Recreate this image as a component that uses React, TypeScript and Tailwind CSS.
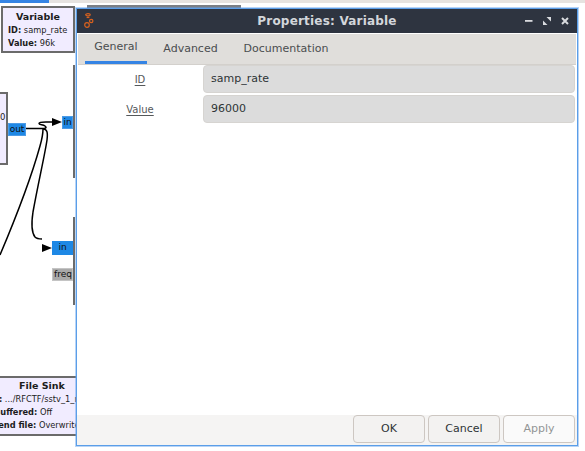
const FONT = "font-['DejaVu_Sans',sans-serif]"

function Logo() {
  return (
    <svg width="10" height="16" viewBox="0 0 10 16" fill="none" stroke="#d9621e" strokeWidth="1.2">
      <ellipse cx="4" cy="1.8" rx="2.3" ry="1.1" />
      <path d="M2.6 4.4h2.8" strokeWidth="1.4" />
      <circle cx="7.2" cy="8" r="1.7" />
      <circle cx="3" cy="12" r="2.3" />
    </svg>
  )
}

function Canvas() {
  return (
    <>
      {/* top strip */}
      <div className="absolute left-0 top-0 h-[3px] w-[585px] bg-[#e6e3e0]" />
      <div className="absolute left-0 top-0 h-[3px] w-[49px] bg-[#3584e4]" />
      <div className="absolute left-[87px] top-[5px] h-[3px] w-[154px] bg-[#7b7f85]" />

      {/* Variable block */}
      <div className="absolute left-[1px] top-[6px] flex h-[47px] w-[74px] flex-col items-center border-2 border-[#6b6b6b] bg-[#f1ecff] pt-[2px] text-[#1c1c1c]">
        <div className="text-[9.5px] leading-[14px] font-bold">Variable</div>
        <div className="w-full pl-[5px] text-[8.25px] leading-[13px] whitespace-nowrap"><b>ID:</b> samp_rate</div>
        <div className="w-full pl-[5px] text-[8.25px] leading-[13px] whitespace-nowrap"><b>Value:</b> 96k</div>
      </div>

      {/* source block edge */}
      <div className="absolute left-0 top-[92px] h-[73px] w-[8px] border-y-2 border-r-2 border-[#6b6b6b] bg-[#f1ecff]">
        <span className="absolute left-0 top-[19px] text-[8.5px] leading-[9px] text-[#222]">0</span>
      </div>

      {/* right blocks behind the dialog */}
      <div className="absolute left-[73px] top-[65px] h-[113px] w-[2px] bg-[#6b6b6b]" />
      <div className="absolute left-[73px] top-[217px] h-[88px] w-[2px] bg-[#6b6b6b]" />

      {/* ports */}
      <div className="absolute left-[8px] top-[123px] flex h-[13px] w-[18px] items-center justify-center border border-[#4d9be6] bg-[#1e88e5] text-[9px] text-[#111]">out</div>
      <div className="absolute left-[62px] top-[116px] flex h-[13px] w-[11px] items-center justify-center border border-[#4d9be6] bg-[#1e88e5] text-[9px] text-[#111]">in</div>
      <div className="absolute left-[52px] top-[241px] flex h-[14px] w-[21px] items-center justify-center bg-[#1e88e5] text-[9px] text-[#111]">in</div>
      <div className="absolute left-[52px] top-[268px] flex h-[13px] w-[21px] items-center overflow-hidden border border-[#c4c4c4] bg-[#a9a9a9] pl-[1px] text-[9px] text-[#111]">freq</div>

      {/* connections */}
      <svg className="absolute left-0 top-[110px]" width="73" height="160" viewBox="0 0 73 160" fill="none" stroke="#000" strokeWidth="1.5">
        <path d="M26 18.5h16c4 0 5-1 3-2.5s-6-1-6-2.500 4-1.500 7-1.500h7" />
        <path d="M52 8l10 4-10 4z" fill="#000" stroke="none" />
        <path d="M43 19c4 0 5 3 4 11-2 14-9 44-14 72-2 13-1 21 2 25 2 2 4 2 7 2" />
        <path d="M42 134l10 4-10 4z" fill="#000" stroke="none" />
        <path d="M43 19c0 5-1 10-3 17-5 18-15 50-40 109" />
      </svg>

      {/* File Sink block */}
      <div className="absolute left-[-40px] top-[376px] flex h-[60px] w-[162px] flex-col border-y-2 border-[#6b6b6b] bg-[#f1ecff] text-[#1c1c1c] whitespace-nowrap">
        <div className="pl-[59px] pt-[1px] text-[9.5px] leading-[14px] font-bold">File Sink</div>
        <div className="pl-[22px] text-[8.25px] leading-[13px]"><b>File:</b> .../RFCTF/sstv_1_r</div>
        <div className="pl-[34px] text-[8.25px] leading-[13px]"><b>Buffered:</b> Off</div>
        <div className="pl-[20px] text-[8.25px] leading-[13px]"><b>Append file:</b> Overwrite</div>
      </div>
    </>
  )
}

function Field({ label, value }: { label: string; value: string }) {
  return (
    <div className="flex h-[28px] items-center">
      <div className="w-[126px] pt-[1px] text-center text-[10px] text-[#55585a] underline underline-offset-2">{label}</div>
      <div className="flex h-full w-[372px] items-center rounded-[4px] border border-[#d6d4d1] bg-[#dcdcdc] pl-[7px] pt-[1px] text-[11px] text-[#2e3436]">{value}</div>
    </div>
  )
}

function Btn({ label, disabled }: { label: string; disabled?: boolean }) {
  return (
    <button className={`h-[28px] w-[72px] rounded-[4px] border border-[#cdc7c2] text-[11px] ${disabled ? 'bg-[#fafafa] text-[#929595]' : 'bg-[#f3f2f1] text-[#2e3436]'}`}>
      {label}
    </button>
  )
}

export default function App() {
  return (
    <div className={`relative h-[451px] w-[585px] overflow-hidden bg-white ${FONT}`}>
      <Canvas />

      {/* dialog window */}
      <div className="absolute left-[76px] top-[8px] flex h-[438px] w-[502px] flex-col border border-[#5b9ee8] bg-white shadow-[0_0_0_1px_rgba(98,160,234,0.45)]">
        <div className="flex h-[24px] shrink-0 items-center bg-[#2e3440] px-[7px]">
          <div className="w-[60px]">
            <Logo />
          </div>
          <div className="flex-1 text-center text-[12px] font-bold tracking-[0.2px] text-[#d3d6db]">Properties: Variable</div>
          <div className="flex w-[60px] items-center justify-end gap-[10px] pr-[1px] text-[#d8dade]">
            <svg width="8" height="8" viewBox="0 0 8 8" fill="currentColor"><path d="M0 3h7.500v1.800H0z" /></svg>
            <svg width="8" height="8" viewBox="0 0 8 8" fill="currentColor"><path d="M3.500 0H8v4.500zM0 3.500L4.500 8H0z" /></svg>
            <svg width="8" height="8" viewBox="0 0 8 8" fill="none" stroke="currentColor" strokeWidth="2"><path d="M1 1l6 6M7 1L1 7" /></svg>
          </div>
        </div>

        <div className="mx-[1px] mt-[1px] flex h-[31px] shrink-0 items-stretch gap-[1px] border-b border-[#d3d0cc] bg-[#e0dedb] pl-[7px] text-[11px] text-[#4a4d4f]">
          <div className="flex w-[62px] items-center justify-center border-b-[3px] border-[#3584e4]">General</div>
          <div className="flex w-[85px] items-center justify-center">Advanced</div>
          <div className="flex w-[104px] items-center justify-center">Documentation</div>
        </div>

        <div className="flex flex-1 flex-col gap-[2px]">
          <Field label="ID" value="samp_rate" />
          <Field label="Value" value="96000" />
        </div>

        <div className="flex h-[30px] shrink-0 items-start justify-end gap-[3px] bg-[#f5f4f3] pr-[2px]">
          <Btn label="OK" />
          <Btn label="Cancel" />
          <Btn label="Apply" disabled />
        </div>
      </div>
    </div>
  )
}
